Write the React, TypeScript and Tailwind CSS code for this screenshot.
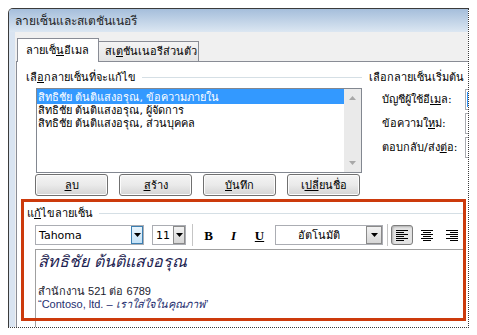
import React from "react";

function Tri({ color = "#000" }: { color?: string }) {
  return (
    <svg width="7" height="4" viewBox="0 0 7 4">
      <path d="M0 0 H7 L3.5 4 Z" fill={color} />
    </svg>
  );
}

function AlignIcon({ kind }: { kind: "left" | "center" | "right" }) {
  const rows = [0, 2, 4, 6, 8, 10];
  return (
    <svg width="12" height="11" viewBox="0 0 12 11">
      {rows.map((y, i) => {
        const long = i % 2 === 0;
        const w = long ? 12 : 8;
        let x = 0;
        if (kind === "center") x = (12 - w) / 2;
        if (kind === "right") x = 12 - w;
        return <rect key={y} x={x} y={y} width={w} height={1} fill="#000" />;
      })}
    </svg>
  );
}

function Btn({ children }: { children: React.ReactNode }) {
  return (
    <div className="w-[73px] h-[22px] rounded-[3px] border border-[#707070] bg-linear-to-b from-[#f4f4f4] via-[#eaeaea] to-[#d4d4d4] shadow-[inset_0_0_0_1px_#fcfcfc] flex items-center justify-center">
      {children}
    </div>
  );
}

export default function App() {
  return (
    <div className="w-[477px] h-[335px] bg-white overflow-hidden pl-[8px] pt-[8px] font-['Tahoma','DejaVu_Sans','Noto_Sans',sans-serif] text-[11px] text-black leading-none">
      <div className="w-[461px] h-[320px] border border-[#3b3b3b] [border-style:solid_dotted_dotted_solid] rounded-tl-[5px] overflow-hidden flex flex-col">
        {/* title bar */}
        <div className="h-[23px] shrink-0 bg-linear-to-b from-[#a5bedb] to-[#dce7f2] flex items-center pl-[6px] text-[12px] text-[#1e1e1e] whitespace-nowrap">
          ลายเซ็นและสเตชันเนอรี
        </div>
        <div className="flex-1 flex min-h-0">
          <div className="w-[6px] shrink-0 bg-[#d9e4f1]" />
          <div className="flex-1 bg-[#f0f0f0] flex flex-col pt-[6px] pl-[1px] min-w-0">
            {/* tabs */}
            <div className="h-[23px] shrink-0 flex items-end pl-[1px]">
              <div className="relative z-10 -mb-px h-[24px] w-[82px] bg-white border-x border-t border-[#898c95] flex items-center pl-[8px] whitespace-nowrap">
                ลายเซ็<span className="underline">น</span>อีเมล
              </div>
              <div className="h-[20px] w-[100px] border-r border-t border-[#898c95] bg-linear-to-b from-[#f4f4f4] to-[#e4e4e4] flex items-center pl-[6px] whitespace-nowrap">
                สเ<span className="underline">ต</span>ชันเนอรีส่วนตัว
              </div>
            </div>
            {/* panel */}
            <div className="flex-1 bg-white border-t border-l border-[#898c95] pl-[4px] pt-[8px] flex flex-col min-h-0">
              <div className="flex">
                {/* left column */}
                <div className="w-[341px] shrink-0 pl-[5px] flex flex-col">
                  <div className="h-[14px] flex items-center">
                    <span className="whitespace-nowrap">เลื<span className="underline">อ</span>กลายเซ็นที่จะแก้ไข</span>
                    <div className="flex-1 h-px bg-[#d5dfe5] ml-[6px]" />
                  </div>
                  <div className="mt-[4px] ml-[10px] w-[326px] h-[85px] border border-[#828790] bg-white flex">
                    <div className="flex-1 flex flex-col">
                      <div className="h-[15px] pt-[2px] bg-[#3399ff] text-white pl-[1px] flex items-center whitespace-nowrap">
                        สิทธิชัย ต้นติแสงอรุณ, ข้อความภายใน
                      </div>
                      <div className="h-[13px] pl-[1px] flex items-center whitespace-nowrap">
                        สิทธิชัย ต้นติแสงอรุณ, ผู้จัดการ
                      </div>
                      <div className="h-[13px] pl-[1px] flex items-center whitespace-nowrap">
                        สิทธิชัย ต้นติแสงอรุณ, ส่วนบุคคล
                      </div>
                    </div>
                    <div className="w-[17px] bg-[#eaeaea] flex flex-col items-center justify-between py-[7px]">
                      <svg width="7" height="4" viewBox="0 0 7 4">
                        <path d="M0 4 H7 L3.5 0 Z" fill="#a8a8a8" />
                      </svg>
                      <Tri color="#a8a8a8" />
                    </div>
                  </div>
                  <div className="mt-[1px] ml-[9px] flex gap-[11px]">
                    <Btn>
                      <span className="underline">ล</span>บ
                    </Btn>
                    <Btn>
                      <span className="underline">ส</span>ร้าง
                    </Btn>
                    <Btn>
                      <span className="underline">บั</span>นทึก
                    </Btn>
                    <Btn>
                      เ<span className="underline">ปลี่</span>ยนชื่อ
                    </Btn>
                  </div>
                </div>
                {/* right column */}
                <div className="ml-[7px] flex flex-col whitespace-nowrap">
                  <div className="h-[14px] flex items-center">เลือกลายเซ็นเริ่มต้น</div>
                  <div className="mt-[3px] flex flex-col">
                    <div className="h-[24px] flex items-center pl-[13px]">
                      <div className="w-[83px]">
                        บัญชีผู้ใช้อี<span className="underline">เม</span>ล:
                      </div>
                      <div className="w-[20px] h-[21px] border border-[#abadb3] bg-white pl-[1px] py-[2px]">
                        <div className="w-[3px] h-full bg-[#3399ff]" />
                      </div>
                    </div>
                    <div className="h-[24px] flex items-center pl-[13px]">
                      <div className="w-[83px]">
                        ข้อความใ<span className="underline">ห</span>ม่:
                      </div>
                      <div className="w-[20px] h-[21px] border border-[#abadb3] bg-white" />
                    </div>
                    <div className="h-[24px] flex items-center pl-[13px]">
                      <div className="w-[83px]">
                        ตอบกลับ/ส่ง<span className="underline">ต่</span>อ:
                      </div>
                      <div className="w-[20px] h-[21px] border border-[#abadb3] bg-white" />
                    </div>
                  </div>
                </div>
              </div>

              {/* red highlighted edit group */}
              <div className="mt-[3px] w-[445px] h-[122px] shrink-0 border-[3px] border-[#cc3a0c] flex flex-col">
                <div className="pt-[4px] pl-[3px] h-[18px] flex items-center">
                  <span className="whitespace-nowrap">
                    แ<span className="underline">ก้</span>ไขลายเซ็น
                  </span>
                  <div className="flex-1 h-px bg-[#d5dfe5] ml-[6px]" />
                </div>
                {/* toolbar */}
                <div className="mt-[5px] ml-[11px] h-[20px] flex items-center">
                  <div className="w-[109px] h-[20px] border border-[#abadb3] bg-white flex items-center">
                    <span className="flex-1 pl-[3px]">Tahoma</span>
                    <div className="w-[12px] h-[18px] border border-[#3c7fb1] bg-linear-to-b from-[#e8f4fc] to-[#c4e2f7] flex items-center justify-center">
                      <Tri />
                    </div>
                  </div>
                  <div className="ml-[8px] w-[34px] h-[20px] border border-[#abadb3] bg-white flex items-center">
                    <span className="flex-1 pl-[3px]">11</span>
                    <div className="w-[12px] h-[18px] border border-[#8a8a8a] bg-linear-to-b from-[#f2f2f2] to-[#d6d6d6] flex items-center justify-center">
                      <Tri />
                    </div>
                  </div>
                  <div className="ml-[6px] w-px h-[22px] bg-[#c5c5c5]" />
                  <div className="ml-[3px] w-[25px] h-[20px] flex items-center justify-center font-['Liberation_Serif',serif] font-bold text-[13px]">
                    B
                  </div>
                  <div className="w-[25px] h-[20px] flex items-center justify-center font-['Liberation_Serif',serif] font-bold italic text-[13px]">
                    I
                  </div>
                  <div className="ml-px w-[25px] h-[20px] flex items-center justify-center font-['Liberation_Serif',serif] font-bold underline text-[13px]">
                    U
                  </div>
                  <div className="ml-[3px] w-[108px] h-[20px] border border-[#abadb3] bg-white flex items-center">
                    <span className="flex-1 text-center pr-[4px]">อัตโนมัติ</span>
                    <div className="w-[16px] h-[18px] border border-[#8a8a8a] bg-linear-to-b from-[#f2f2f2] to-[#d6d6d6] flex items-center justify-center">
                      <Tri />
                    </div>
                  </div>
                  <div className="ml-[4px] w-px h-[22px] bg-[#c5c5c5]" />
                  <div className="ml-[3px] w-[22px] h-[20px] rounded-[3px] border border-[#7d7d7d] bg-[#e3e3e3] shadow-[inset_1px_1px_2px_#b0b0b0] flex items-center justify-center">
                    <AlignIcon kind="left" />
                  </div>
                  <div className="ml-[3px] w-[22px] h-[20px] flex items-center justify-center">
                    <AlignIcon kind="center" />
                  </div>
                  <div className="ml-[3px] w-[22px] h-[20px] flex items-center justify-center">
                    <AlignIcon kind="right" />
                  </div>
                </div>
                <div className="mt-[4px] ml-[11px] h-px bg-[#a0a0a0]" />
                {/* editor */}
                <div className="ml-[11px] flex-1 border-l border-[#a0a0a0] pl-[2px] pt-[1px] flex flex-col">
                  <div className="h-[22px] flex items-center italic text-[16px] text-[#1c2250] whitespace-nowrap">
                    สิทธิชัย ต้นติแสงอรุณ
                  </div>
                  <div className="mt-[12px] h-[13px] flex items-center text-[11px] font-['Liberation_Sans','DejaVu_Sans',sans-serif] text-[#1a1a2e] whitespace-nowrap">
                    สำนักงาน 521 ต่อ 6789
                  </div>
                  <div className="h-[13px] flex items-center text-[11px] font-['Liberation_Sans','DejaVu_Sans',sans-serif] text-[#1f2f70] whitespace-nowrap">
                    “Contoso, ltd. – <span className="italic ml-[3px]">เราใส่ใจในคุณภาพ</span>”
                  </div>
                </div>
              </div>
              <div className="ml-[14px] w-px h-[10px] bg-[#a0a0a0]" />
            </div>
          </div>
        </div>
      </div>
    </div>
  );
}
